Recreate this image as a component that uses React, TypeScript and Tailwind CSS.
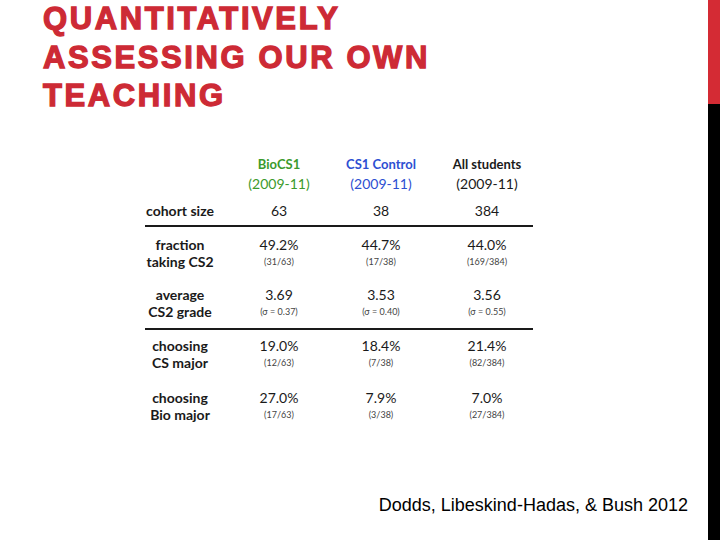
const rows = [
  { label: ["fraction", "taking CS2"], values: ["49.2%", "44.7%", "44.0%"], notes: ["(31/63)", "(17/38)", "(169/384)"], mt: "mt-[9px]" },
  { label: ["average", "CS2 grade"], values: ["3.69", "3.53", "3.56"], notes: ["(σ =  0.37)", "(σ = 0.40)", "(σ = 0.55)"], mt: "mt-[16px]" },
  { label: ["choosing", "CS major"], values: ["19.0%", "18.4%", "21.4%"], notes: ["(12/63)", "(7/38)", "(82/384)"], mt: "mt-[7px]" },
  { label: ["choosing", "Bio major"], values: ["27.0%", "7.9%", "7.0%"], notes: ["(17/63)", "(3/38)", "(27/384)"], mt: "mt-[18px]" },
];

// column offsets so the centres land where the slide has them
const cols = ["ml-[14px] w-[100px]", "ml-[2px] w-[100px]", "ml-[6px] w-[100px]"];

const Rule = ({ mt }: { mt: string }) => (
  <div className={`${mt} h-[2px] w-[388px] bg-[#1a1a1a]`} />
);

const DataRow = ({ row }: { row: (typeof rows)[number] }) => (
  <div className={`${row.mt} flex`}>
    <div className="w-[70px] text-center text-[14px] font-bold leading-[17px] text-[#1a1a1a]">
      <div>{row.label[0]}</div>
      <div>{row.label[1]}</div>
    </div>
    {row.values.map((v, i) => (
      <div key={i} className={`${cols[i]} text-center text-[#1a1a1a]`}>
        <div className="text-[14px] leading-[18px]">{v}</div>
        <div className="text-[9px] leading-[16px] text-[#444]">{row.notes[i]}</div>
      </div>
    ))}
  </div>
);

export default function App() {
  return (
    <div className="flex h-[540px] w-[720px] overflow-hidden bg-white">
      <div className="flex flex-1 flex-col">
        <h1 className="pl-[43px] font-['Liberation_Sans',Arial,sans-serif] text-[31px] font-bold leading-[38.5px] tracking-[2.6px] text-[#cd2a35] [-webkit-text-stroke:1.3px_#cd2a35]">
          QUANTITATIVELY
          <br />
          ASSESSING OUR OWN
          <br />
          TEACHING
        </h1>

        <div className="ml-[145px] mt-[39px] font-['Lato','Open_Sans',sans-serif]">
          {/* header */}
          <div className="flex leading-[19px]">
            <div className="w-[70px]" />
            <div className={`${cols[0]} text-center text-[#3b9a2c]`}>
              <div className="text-[13px] font-bold">BioCS1</div>
              <div className="text-[14px]">(2009-11)</div>
            </div>
            <div className={`${cols[1]} text-center text-[#2d4fd2]`}>
              <div className="text-[13px] font-bold">CS1 Control</div>
              <div className="text-[14px]">(2009-11)</div>
            </div>
            <div className={`${cols[2]} text-center text-[#1a1a1a]`}>
              <div className="text-[13px] font-bold">All students</div>
              <div className="text-[14px]">(2009-11)</div>
            </div>
          </div>

          <div className="mt-[8px] flex leading-[20px] text-[#1a1a1a]">
            <div className="w-[70px] text-center text-[14px] font-bold">cohort size</div>
            <div className={`${cols[0]} text-center text-[14px]`}>63</div>
            <div className={`${cols[1]} text-center text-[14px]`}>38</div>
            <div className={`${cols[2]} text-center text-[14px]`}>384</div>
          </div>
          <Rule mt="mt-[4px]" />

          <DataRow row={rows[0]} />
          <DataRow row={rows[1]} />
          <Rule mt="mt-[8px]" />
          <DataRow row={rows[2]} />
          <DataRow row={rows[3]} />
        </div>

        <div className="mt-auto mb-[25px] pr-[20px] text-right font-['Liberation_Sans',Arial,sans-serif] text-[18px] leading-[20px] text-black">
          Dodds, Libeskind-Hadas, &amp; Bush 2012
        </div>
      </div>

      <div className="flex w-[12px] flex-col">
        <div className="h-[104px] bg-[#d42b34]" />
        <div className="flex-1 bg-black" />
      </div>
    </div>
  );
}
